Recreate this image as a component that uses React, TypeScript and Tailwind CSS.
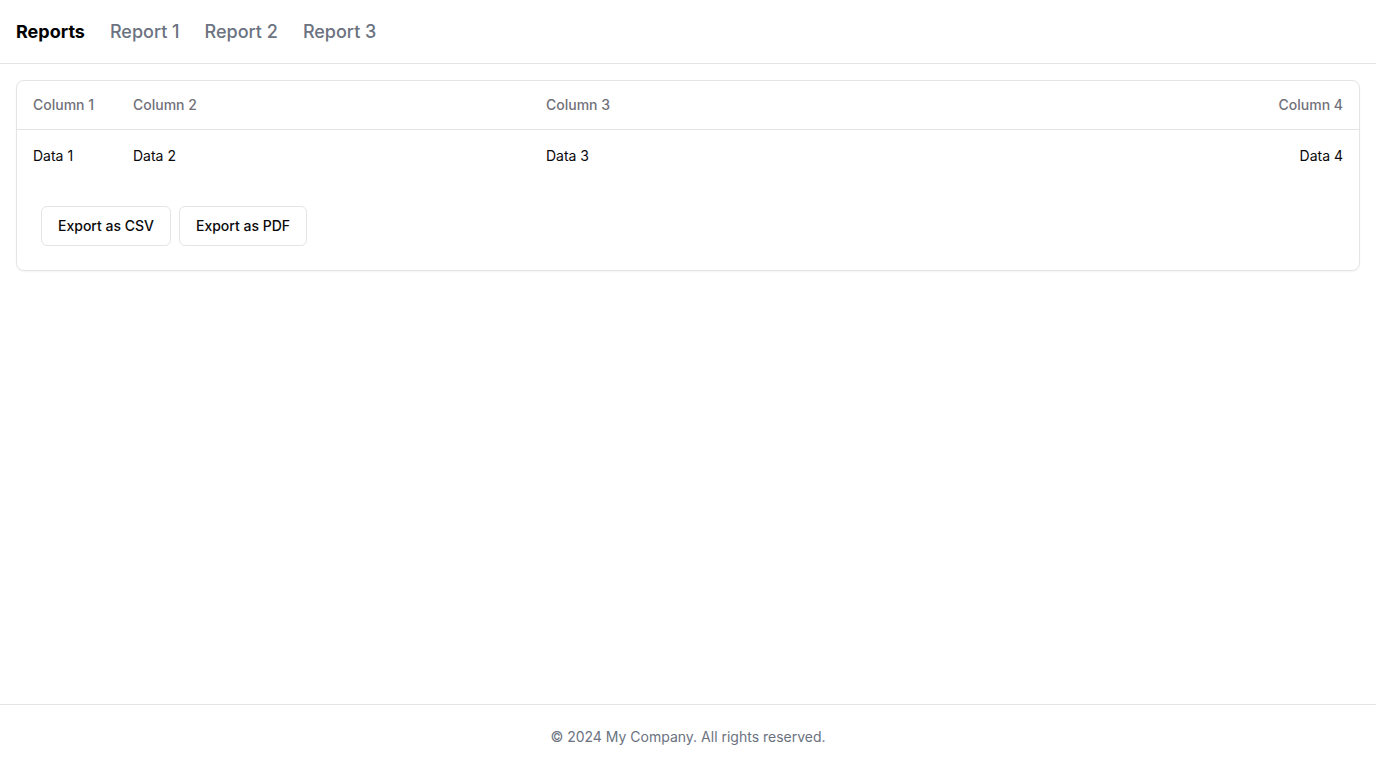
const links = ["Report 1", "Report 2", "Report 3"];

const buttonClass =
  "inline-flex h-10 items-center justify-center rounded-md border border-[#e4e4e7] bg-white px-4 py-2 text-sm font-medium whitespace-nowrap text-[#09090b] hover:bg-[#f4f4f5]";

export default function App() {
  return (
    <div className="flex min-h-screen flex-col bg-white font-['Inter',sans-serif] text-[#09090b]">
      <header className="flex h-16 shrink-0 items-center border-b border-[#e4e4e7] px-4">
        <nav className="flex items-center gap-[25px] text-lg font-medium">
          <a href="#" className="font-bold text-black">
            Reports
          </a>
          {links.map((label) => (
            <a key={label} href="#" className="text-[#6b7280]">
              {label}
            </a>
          ))}
        </nav>
      </header>
      <main className="flex-1 p-4">
        <div className="rounded-lg border border-[#e4e4e7] shadow-xs">
          <table className="w-full text-sm">
            <thead>
              <tr className="border-b border-[#e4e4e7] text-left text-[#71717a]">
                <th className="h-12 w-[100px] px-4 font-medium">Column 1</th>
                <th className="h-12 px-4 font-medium">Column 2</th>
                <th className="h-12 px-4 font-medium">Column 3</th>
                <th className="h-12 px-4 text-right font-medium">Column 4</th>
              </tr>
            </thead>
            <tbody>
              <tr>
                <td className="p-4">Data 1</td>
                <td className="p-4">Data 2</td>
                <td className="p-4">Data 3</td>
                <td className="p-4 text-right">Data 4</td>
              </tr>
            </tbody>
          </table>
          <div className="flex gap-2 p-6">
            <button type="button" className={buttonClass}>
              Export as CSV
            </button>
            <button type="button" className={buttonClass}>
              Export as PDF
            </button>
          </div>
        </div>
      </main>
      <footer className="flex h-16 shrink-0 items-center justify-center border-t border-[#e4e4e7] px-4">
        <p className="text-sm text-[#6b7280]">© 2024 My Company. All rights reserved.</p>
      </footer>
    </div>
  );
}
